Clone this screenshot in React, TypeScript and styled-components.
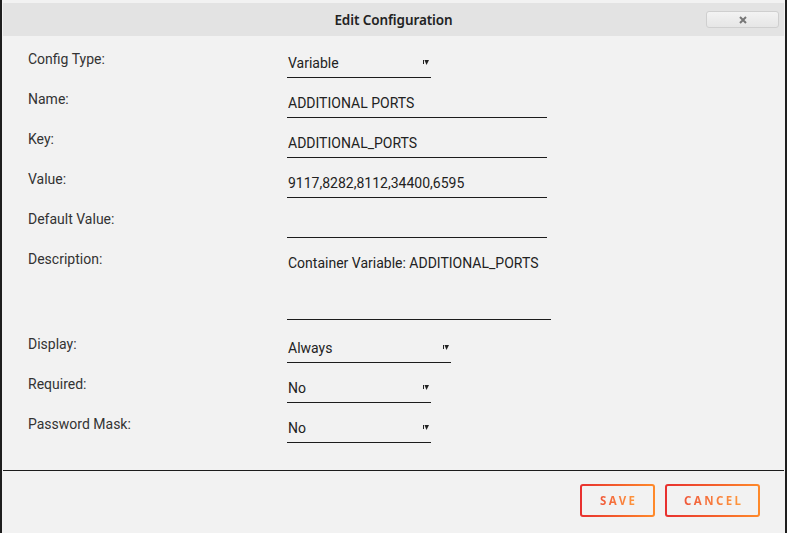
import React from "react";
import styled, { createGlobalStyle } from "styled-components";

const GlobalStyle = createGlobalStyle`
  html, body {
    margin: 0;
    padding: 0;
    background: #f2f2f2;
  }
  * {
    box-sizing: border-box;
  }
`;

const Dialog = styled.div`
  width: 787px;
  height: 533px;
  background: #f2f2f2;
  border-left: 2px solid #1e1e1e;
  border-right: 2px solid #1e1e1e;
  padding: 3px 1px 0 1px;
  display: flex;
  flex-direction: column;
  font-family: Roboto, "Liberation Sans", sans-serif;
`;

const Header = styled.div`
  height: 33px;
  background: #e3e3e3;
  display: flex;
  align-items: center;
  justify-content: center;
  position: relative;
`;

const Title = styled.span`
  font-family: "Noto Sans", "Liberation Sans", sans-serif;
  font-weight: 600;
  font-size: 13.5px;
  color: #222;
  letter-spacing: -0.1px;
`;

const CloseButton = styled.button`
  position: absolute;
  right: 5px;
  top: 8px;
  width: 73px;
  height: 17px;
  border: 1px solid #cfcfcf;
  border-radius: 3px;
  background: linear-gradient(#f3f3f3 0%, #ececec 50%, #e6e6e6 100%);
  display: flex;
  align-items: center;
  justify-content: center;
  padding: 0;
`;

const Form = styled.div`
  display: grid;
  grid-template-columns: 259px 1fr;
  row-gap: 11px;
  padding: 13px 0 0 25px;
  flex: 1;
  align-content: start;
`;

const Label = styled.div<{ $tall?: boolean }>`
  font-size: 14px;
  line-height: 20px;
  color: #333;
  margin-bottom: ${(p) => (p.$tall ? "3px" : "0")};
`;

const TextInput = styled.input<{ $width: number }>`
  width: ${(p) => p.$width}px;
  height: 29px;
  border: none;
  border-bottom: 1px solid #1c1c1c;
  background: transparent;
  padding: 0 1px;
  font-family: Roboto, "Liberation Sans", sans-serif;
  font-size: 14px;
  color: #222;
  outline: none;
`;

const TextArea = styled.textarea<{ $width: number }>`
  width: ${(p) => p.$width}px;
  height: 71px;
  border: none;
  border-bottom: 1px solid #1c1c1c;
  background: transparent;
  padding: 6px 1px 0;
  font-family: Roboto, "Liberation Sans", sans-serif;
  font-size: 14px;
  line-height: 16px;
  color: #222;
  resize: none;
  outline: none;
  margin-bottom: 3px;
`;

const Select = styled.div<{ $width: number }>`
  width: ${(p) => p.$width}px;
  height: 29px;
  border-bottom: 1px solid #1c1c1c;
  display: flex;
  align-items: center;
  justify-content: space-between;
  padding: 0 2px 0 1px;
  font-size: 14px;
  color: #222;
`;

const Arrow = () => (
  <svg width="6" height="5" viewBox="0 0 6 5" style={{ marginTop: -1 }}>
    <rect x="0" y="0" width="1" height="4" fill="#222" />
    <polygon points="1.5,0 6,0 3.5,5" fill="#222" />
  </svg>
);

const Footer = styled.div`
  border-top: 1px solid #1c1c1c;
  height: 63px;
  display: flex;
  justify-content: flex-end;
  align-items: flex-start;
  gap: 10px;
  padding: 13px 24px 0 0;
`;

const ActionButton = styled.button<{ $width: number }>`
  width: ${(p) => p.$width}px;
  height: 33px;
  border: 2px solid transparent;
  border-radius: 3px;
  background: linear-gradient(#f2f2f2, #f2f2f2) padding-box,
    linear-gradient(90deg, #e8302f, #ff8a2a) border-box;
  display: flex;
  align-items: center;
  justify-content: center;
  padding: 0;
`;

const ButtonText = styled.span`
  font-family: "Noto Sans", "Liberation Sans", sans-serif;
  font-weight: 700;
  font-size: 11.5px;
  letter-spacing: 2.4px;
  margin-right: -2.4px;
  background: linear-gradient(90deg, #f0583a, #ff9a3c);
  -webkit-background-clip: text;
  background-clip: text;
  color: transparent;
`;

export default function App() {
  return (
    <>
      <GlobalStyle />
      <Dialog>
        <Header>
          <Title>Edit Configuration</Title>
          <CloseButton aria-label="close">
            <svg width="8" height="8" viewBox="0 0 8 8">
              <path d="M1 1 L7 7 M7 1 L1 7" stroke="#777" strokeWidth="2" />
            </svg>
          </CloseButton>
        </Header>
        <Form>
          <Label>Config Type:</Label>
          <Select $width={144}>
            <span>Variable</span>
            <Arrow />
          </Select>

          <Label>Name:</Label>
          <TextInput $width={260} defaultValue="ADDITIONAL PORTS" />

          <Label>Key:</Label>
          <TextInput $width={260} defaultValue="ADDITIONAL_PORTS" />

          <Label>Value:</Label>
          <TextInput $width={260} defaultValue="9117,8282,8112,34400,6595" />

          <Label>Default Value:</Label>
          <TextInput $width={260} defaultValue="" />

          <Label $tall>Description:</Label>
          <TextArea $width={264} defaultValue="Container Variable: ADDITIONAL_PORTS" />

          <Label>Display:</Label>
          <Select $width={164}>
            <span>Always</span>
            <Arrow />
          </Select>

          <Label>Required:</Label>
          <Select $width={144}>
            <span>No</span>
            <Arrow />
          </Select>

          <Label>Password Mask:</Label>
          <Select $width={144}>
            <span>No</span>
            <Arrow />
          </Select>
        </Form>
        <Footer>
          <ActionButton $width={75}>
            <ButtonText>SAVE</ButtonText>
          </ActionButton>
          <ActionButton $width={95}>
            <ButtonText>CANCEL</ButtonText>
          </ActionButton>
        </Footer>
      </Dialog>
    </>
  );
}
